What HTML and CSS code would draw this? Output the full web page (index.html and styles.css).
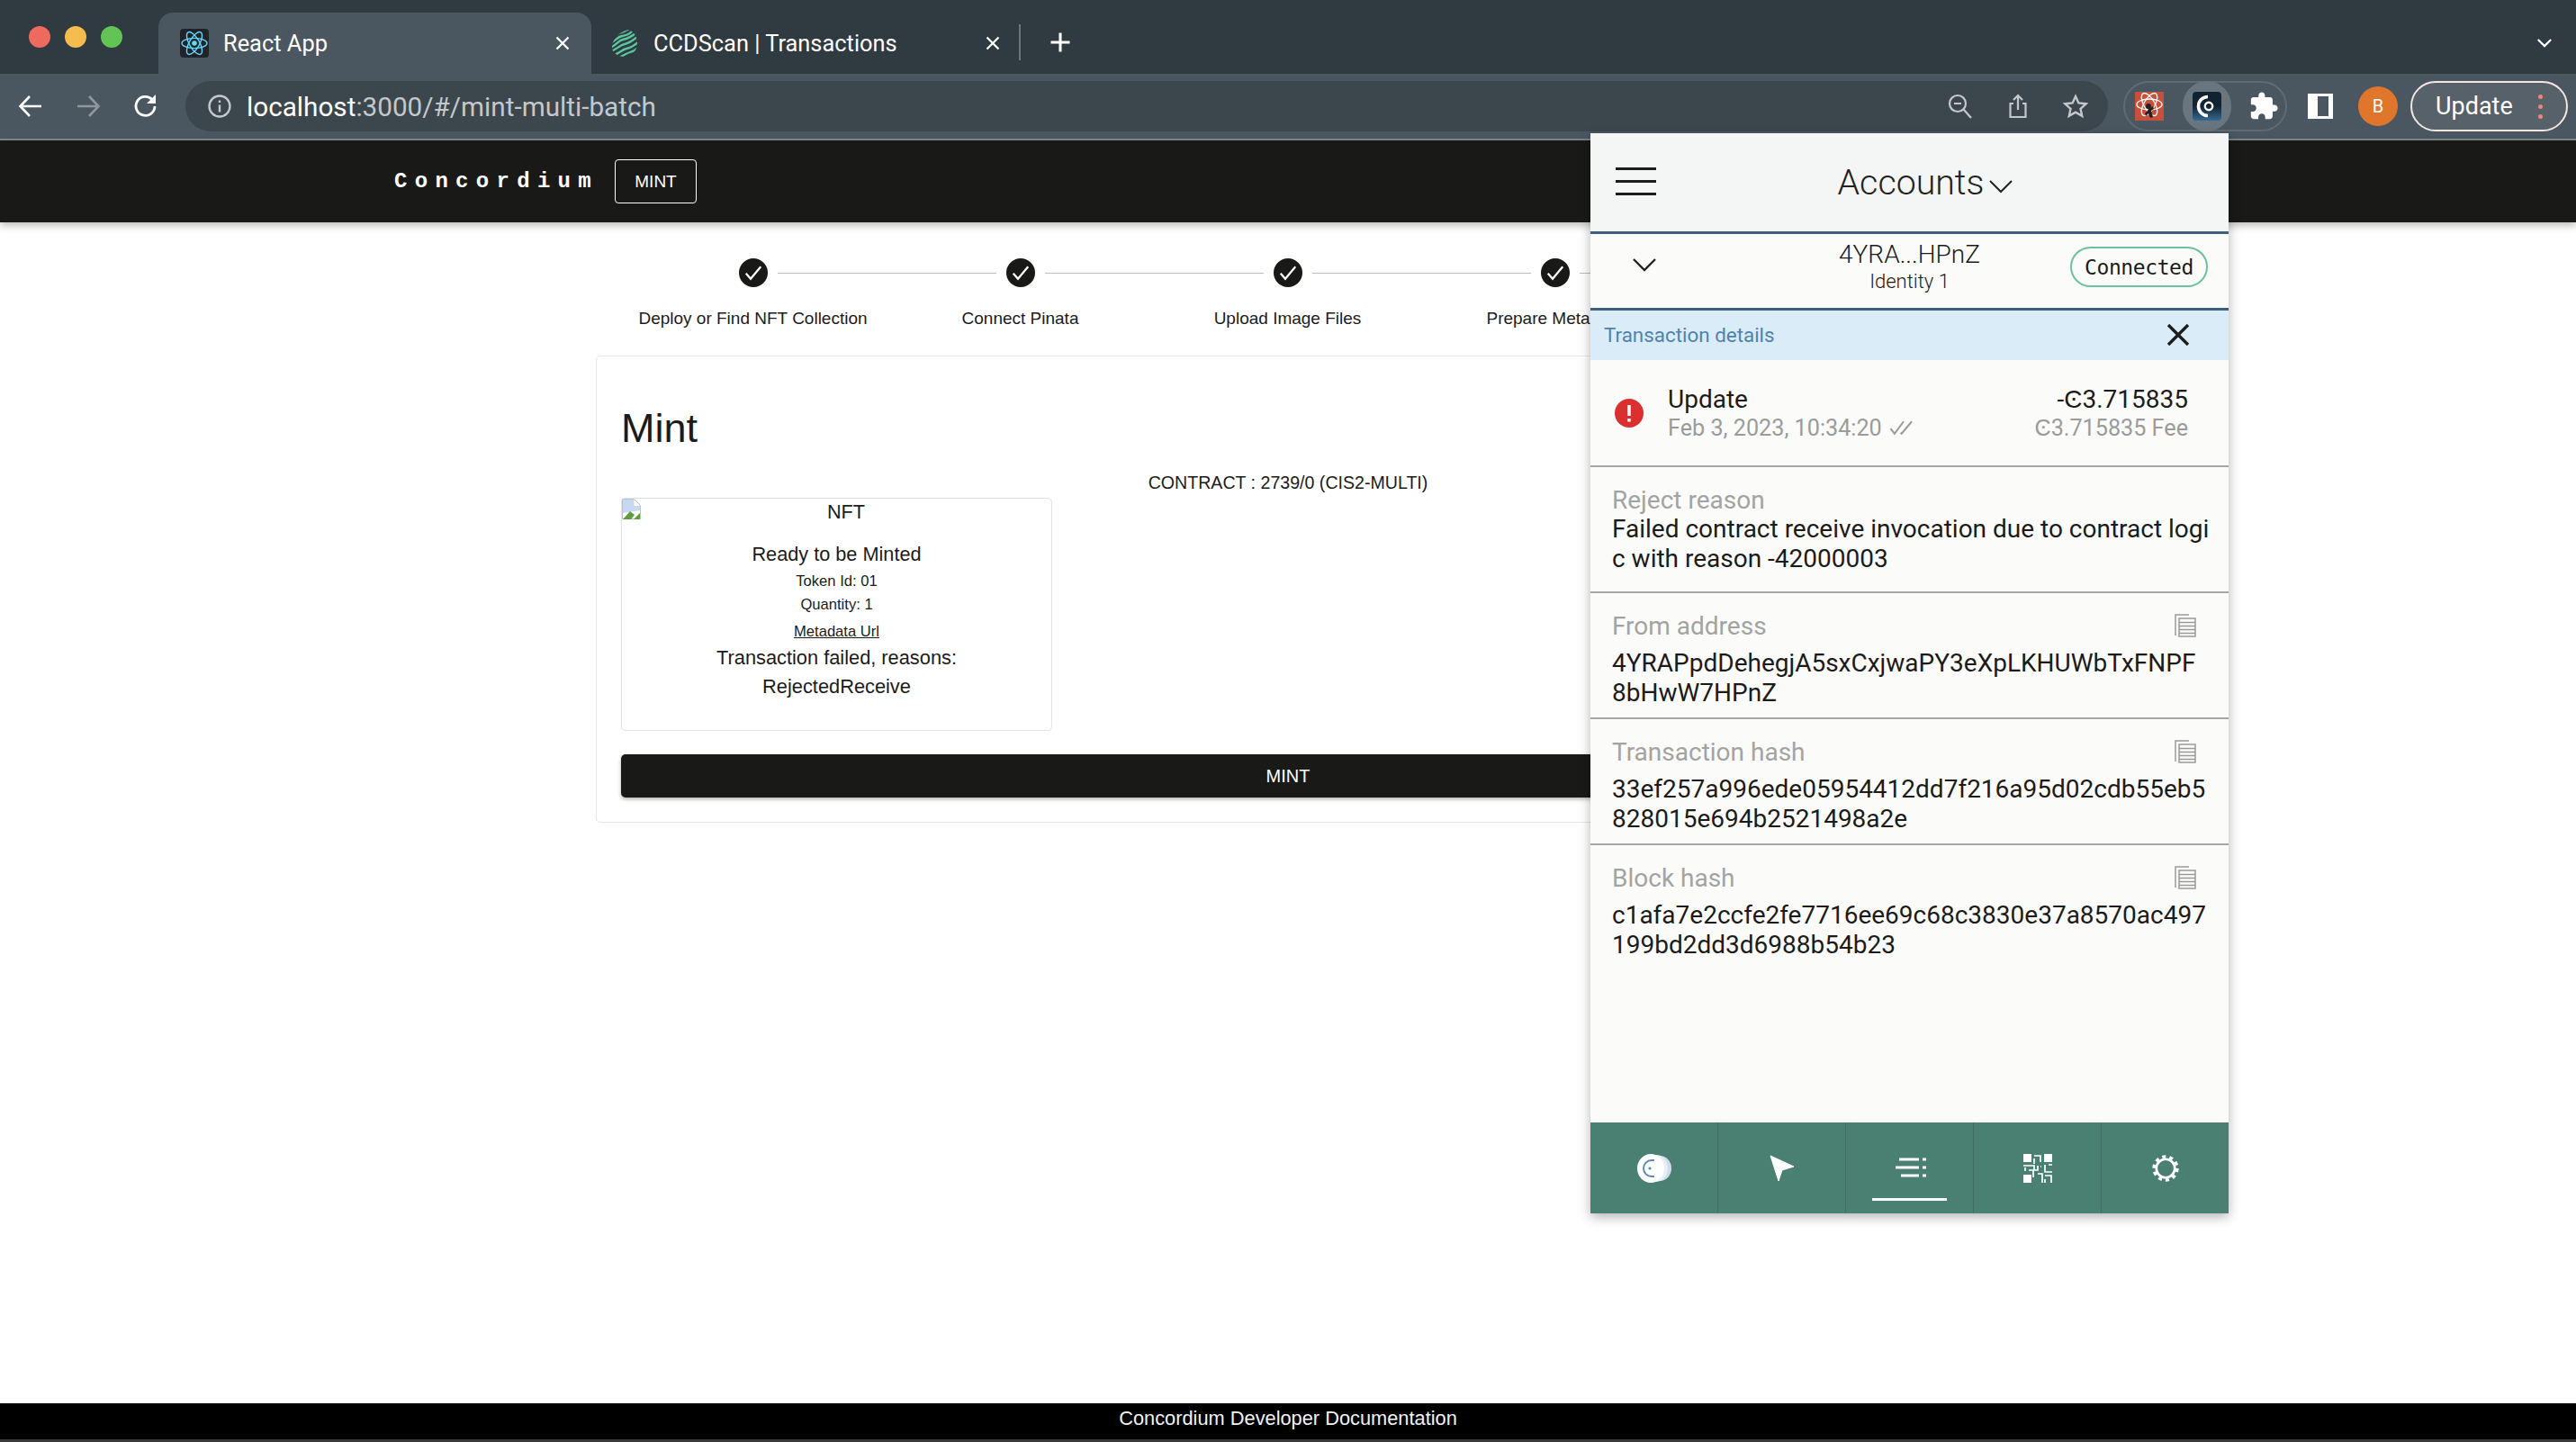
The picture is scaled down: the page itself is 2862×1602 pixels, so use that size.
FILE: index.html
```html
<!DOCTYPE html>
<html lang="en">
  <head>
    <meta charset="UTF-8" />
    <title>React App</title>
    <link rel="stylesheet" href="styles.css">
  </head>
  <body>
    <!-- Browser chrome -->
    <div class="tabstrip">
      <div class="traffic">
        <span class="light light-red"></span>
        <span class="light light-yellow"></span>
        <span class="light light-green"></span>
      </div>
      <div class="tab tab-active">
        <svg class="favicon" viewBox="0 0 32 32">
          <rect width="32" height="32" rx="4" fill="#20232a"/>
          <g fill="none" stroke="#61dafb" stroke-width="1.4">
            <ellipse cx="16" cy="16" rx="14" ry="5.6"/>
            <ellipse cx="16" cy="16" rx="14" ry="5.6" transform="rotate(60 16 16)"/>
            <ellipse cx="16" cy="16" rx="14" ry="5.6" transform="rotate(120 16 16)"/>
          </g>
          <circle cx="16" cy="16" r="2.8" fill="#61dafb"/>
        </svg>
        <span class="tab-title">React App</span>
        <svg class="tab-close" viewBox="0 0 16 16"><path d="M1.500 1.500l13 13M14.500 1.500l-13 13" stroke="#fff" stroke-width="2.200"/></svg>
      </div>
      <div class="tab">
        <svg class="favicon" viewBox="0 0 32 32">
          <defs>
            <clipPath id="leaf"><path d="M20 1c7 2 10 9 10 15s-3 11-10 15c-8 1-16-2-18-9C1 14 8 4 20 1z"/></clipPath>
          </defs>
          <g clip-path="url(#leaf)" fill="none" stroke="#5cc79d" stroke-width="2.300">
            <path d="M0 12c6-3 7-7 12-8s5-3 12-5"/>
            <path d="M0 16c6-3 8-7 13-8s7-1 12-6"/>
            <path d="M0 21c7-3 9-8 14-9s8-2 14-7"/>
            <path d="M1 25c7-3 10-7 15-8s8-3 14-8"/>
            <path d="M4 29c7-2 9-6 14-7s8-3 13-7"/>
            <path d="M9 32c6-2 9-5 13-6s6-2 10-6"/>
          </g>
        </svg>
        <span class="tab-title">CCDScan | Transactions</span>
        <svg class="tab-close" viewBox="0 0 16 16"><path d="M1.500 1.500l13 13M14.500 1.500l-13 13" stroke="#fff" stroke-width="2.200"/></svg>
      </div>
      <span class="tab-sep"></span>
      <svg class="new-tab" viewBox="0 0 24 24"><path d="M12 3v18M3 12h18" stroke="#fff" stroke-width="2.6"/></svg>
      <svg class="tab-menu" viewBox="0 0 20 12"><path d="M2 2l8 8 8-8" fill="none" stroke="#fff" stroke-width="2.4"/></svg>
    </div>

    <div class="toolbar">
      <svg class="nav-icon" viewBox="0 0 28 28"><path d="M26 14H3M13 3L2.500 14 13 25" fill="none" stroke="#fff" stroke-width="2.6"/></svg>
      <svg class="nav-icon nav-off" viewBox="0 0 28 28"><path d="M2 14h23M15 3l10.500 11L15 25" fill="none" stroke="#8f979d" stroke-width="2.6"/></svg>
      <svg class="nav-icon" viewBox="0 0 28 28"><path d="M24 14a10.500 10.500 0 1 1-3-7.500" fill="none" stroke="#fff" stroke-width="2.8"/><path d="M25 1v10H15z" fill="#fff"/></svg>
      <div class="omnibox">
        <svg class="info" viewBox="0 0 28 28"><circle cx="14" cy="14" r="11.500" fill="none" stroke="#c4c8cb" stroke-width="2.400"/><path d="M14 12.500v8M14 7.500v2.600" stroke="#c4c8cb" stroke-width="2.400"/></svg>
        <span class="url"><span class="url-host">localhost</span>:3000/#/mint-multi-batch</span>
        <div class="omni-actions">
          <svg class="omni-icon" viewBox="0 0 28 28"><circle cx="11" cy="11" r="9" fill="none" stroke="#c4c8cb" stroke-width="2.200"/><path d="M7 11h8M17.500 17.500L26 27" stroke="#c4c8cb" stroke-width="2.200"/></svg>
          <svg class="omni-icon" viewBox="0 0 28 28"><path d="M9 11H5.500v15h17V11H19M14 18V2M9 7l5-5 5 5" fill="none" stroke="#c4c8cb" stroke-width="2.200"/></svg>
          <svg class="omni-icon" viewBox="0 0 28 28"><path d="M14 3l3.400 7.400 8.100.9-6 5.500 1.700 8L14 20.700 6.800 24.800l1.700-8-6-5.500 8.100-.9z" fill="none" stroke="#c4c8cb" stroke-width="2.400"/></svg>
        </div>
      </div>
      <div class="ext-group">
        <svg class="ext-icon" viewBox="0 0 32 32">
          <rect width="32" height="32" fill="#c8503a"/>
          <g fill="none" stroke="#fff" stroke-width="1.300">
            <ellipse cx="16" cy="14" rx="14" ry="6"/>
            <ellipse cx="16" cy="14" rx="14" ry="6" transform="rotate(60 16 14)"/>
            <ellipse cx="16" cy="14" rx="14" ry="6" transform="rotate(120 16 14)"/>
          </g>
          <circle cx="15" cy="16" r="3" fill="#222"/>
          <path d="M15 19l5-3 1 3-3 2 2 7-3 1-2-5-3 3-1-3 3-3z" fill="#222"/>
        </svg>
        <div class="ext-active">
          <svg class="ext-icon" viewBox="0 0 32 32">
            <defs>
              <linearGradient id="ccd" x1="0" y1="0" x2="0" y2="1">
                <stop offset="0.5" stop-color="#112233"/>
                <stop offset="1" stop-color="#356a91"/>
              </linearGradient>
            </defs>
            <rect width="32" height="32" rx="4" fill="url(#ccd)"/>
            <path d="M17 5.500a10.500 10.500 0 0 0 0 21" fill="none" stroke="#fff" stroke-width="3.600"/>
            <circle cx="18" cy="16" r="4.200" fill="none" stroke="#fff" stroke-width="2.400"/>
          </svg>
        </div>
        <svg class="ext-puzzle" viewBox="0 0 24 24"><path fill="#fff" d="M20.500 11H19V7c0-1.100-.9-2-2-2h-4V3.500C13 2.120 11.880 1 10.500 1S8 2.120 8 3.500V5H4c-1.100 0-1.990.9-1.990 2v3.800H3.500c1.490 0 2.700 1.210 2.700 2.700s-1.210 2.700-2.700 2.700H2V20c0 1.100.9 2 2 2h3.800v-1.500c0-1.490 1.210-2.700 2.700-2.700 1.490 0 2.700 1.210 2.700 2.700V22H17c1.100 0 2-.9 2-2v-4h1.500c1.380 0 2.500-1.120 2.500-2.500S21.880 11 20.500 11z"/></svg>
      </div>
      <span class="sidebar-icon"></span>
      <span class="avatar">B</span>
      <div class="update-pill">
        <span>Update</span>
        <span class="update-dots"><i></i><i></i><i></i></span>
      </div>
    </div>

    <!-- App header -->
    <header class="app-header">
      <span class="brand">Concordium</span>
      <span class="header-btn">MINT</span>
    </header>

    <!-- Main content -->
    <main class="page">
      <ol class="stepper">
        <li class="step">
          <div class="step-track"><span class="step-line step-line-none"></span><span class="step-dot"><svg viewBox="0 0 16 16"><path d="M2.500 8.500l3.500 4 7.500-9" fill="none" stroke="#fff" stroke-width="1.500"/></svg></span><span class="step-line"></span></div>
          <span class="step-label">Deploy or Find NFT Collection</span>
        </li>
        <li class="step">
          <div class="step-track"><span class="step-line"></span><span class="step-dot"><svg viewBox="0 0 16 16"><path d="M2.500 8.500l3.500 4 7.500-9" fill="none" stroke="#fff" stroke-width="1.500"/></svg></span><span class="step-line"></span></div>
          <span class="step-label">Connect Pinata</span>
        </li>
        <li class="step">
          <div class="step-track"><span class="step-line"></span><span class="step-dot"><svg viewBox="0 0 16 16"><path d="M2.500 8.500l3.500 4 7.500-9" fill="none" stroke="#fff" stroke-width="1.500"/></svg></span><span class="step-line"></span></div>
          <span class="step-label">Upload Image Files</span>
        </li>
        <li class="step">
          <div class="step-track"><span class="step-line"></span><span class="step-dot"><svg viewBox="0 0 16 16"><path d="M2.500 8.500l3.500 4 7.500-9" fill="none" stroke="#fff" stroke-width="1.500"/></svg></span><span class="step-line"></span></div>
          <span class="step-label">Prepare Metadata</span>
        </li>
        <li class="step">
          <div class="step-track"><span class="step-line"></span><span class="step-dot"></span><span class="step-line step-line-none"></span></div>
          <span class="step-label">Mint</span>
        </li>
      </ol>

      <section class="panel">
        <h1 class="panel-title">Mint</h1>
        <p class="contract">CONTRACT : 2739/0 (CIS2-MULTI)</p>
        <div class="nft-card">
          <div class="nft-image">
            <svg class="broken-img" viewBox="0 0 21 23">
              <path d="M.5.500h13l7 7v15H.500z" fill="#fff" stroke="#b9c4d2"/>
              <path d="M1 1h12.500v7H20v5L1 16z" fill="#c9d8f0"/>
              <path d="M1 23l8-9 5 4-4 5z" fill="#5f9c3c"/>
              <path d="M13 23l7-7v7z" fill="#5f9c3c"/>
            </svg>
            <span class="nft-alt">NFT</span>
          </div>
          <p class="nft-line nft-status">Ready to be Minted</p>
          <p class="nft-line nft-small">Token Id: 01</p>
          <p class="nft-line nft-small">Quantity: 1</p>
          <a class="nft-line nft-small nft-link">Metadata Url</a>
          <p class="nft-line nft-error">Transaction failed, reasons:</p>
          <p class="nft-line nft-error">RejectedReceive</p>
        </div>
        <button class="mint-button">MINT</button>
      </section>
    </main>

    <footer class="app-footer">
      <span>Concordium Developer Documentation</span>
    </footer>

    <!-- Wallet extension popup -->
    <aside class="wallet">
      <div class="wallet-top">
        <span class="burger"><i></i><i></i><i></i></span>
        <span class="wallet-title">Accounts<svg class="title-chevron" viewBox="0 0 28 16"><path d="M2 2l12 12L26 2" fill="none" stroke="#222" stroke-width="2"/></svg></span>
      </div>
      <div class="account-row">
        <svg class="account-chevron" viewBox="0 0 28 16"><path d="M2 2l12 12L26 2" fill="none" stroke="#222" stroke-width="2.400"/></svg>
        <div class="account-name">
          <span class="account-addr">4YRA...HPnZ</span>
          <span class="account-id">Identity 1</span>
        </div>
        <span class="connected">Connected</span>
      </div>
      <div class="details-bar">
        <span>Transaction details</span>
        <svg class="details-close" viewBox="0 0 26 24"><path d="M2 1l22 22M24 1L2 23" stroke="#1c1c1c" stroke-width="3.400"/></svg>
      </div>
      <div class="tx-row">
        <svg class="tx-alert" viewBox="0 0 32 32"><circle cx="16" cy="16" r="16" fill="#da3030"/><path d="M16 7v12M16 22v3.500" stroke="#fff" stroke-width="3.400"/></svg>
        <div class="tx-main">
          <span class="tx-type">Update</span>
          <span class="tx-date">Feb 3, 2023, 10:34:20
            <svg class="tx-check" viewBox="0 0 28 16"><path d="M1 9l4 5 9-12M11 13l1 1 10-12" fill="none" stroke="#9b9b9b" stroke-width="1.800"/></svg>
          </span>
        </div>
        <div class="tx-amounts">
          <span class="tx-type">-Ͼ3.715835</span>
          <span class="tx-date">Ͼ3.715835 Fee</span>
        </div>
      </div>
      <div class="detail detail-reject">
        <div class="detail-head"><span class="detail-label">Reject reason</span></div>
        <p class="detail-value">Failed contract receive invocation due to contract logic with reason -42000003</p>
      </div>
      <div class="detail">
        <div class="detail-head">
          <span class="detail-label">From address</span>
          <svg class="copy" viewBox="0 0 24 26"><path d="M1 24V1h15M5 5h18v20H5zM5 9.500h18M5 13.500h18M5 17.500h18M5 21.500h18" fill="none" stroke="#9a9a9a" stroke-width="1.500"/></svg>
        </div>
        <p class="detail-value">4YRAPpdDehegjA5sxCxjwaPY3eXpLKHUWbTxFNPF8bHwW7HPnZ</p>
      </div>
      <div class="detail">
        <div class="detail-head">
          <span class="detail-label">Transaction hash</span>
          <svg class="copy" viewBox="0 0 24 26"><path d="M1 24V1h15M5 5h18v20H5zM5 9.500h18M5 13.500h18M5 17.500h18M5 21.500h18" fill="none" stroke="#9a9a9a" stroke-width="1.500"/></svg>
        </div>
        <p class="detail-value">33ef257a996ede05954412dd7f216a95d02cdb55eb5828015e694b2521498a2e</p>
      </div>
      <div class="detail detail-last">
        <div class="detail-head">
          <span class="detail-label">Block hash</span>
          <svg class="copy" viewBox="0 0 24 26"><path d="M1 24V1h15M5 5h18v20H5zM5 9.500h18M5 13.500h18M5 17.500h18M5 21.500h18" fill="none" stroke="#9a9a9a" stroke-width="1.500"/></svg>
        </div>
        <p class="detail-value">c1afa7e2ccfe2fe7716ee69c68c3830e37a8570ac497199bd2dd3d6988b54b23</p>
      </div>
      <nav class="wallet-nav">
        <div class="nav-cell">
          <svg class="nav-glyph" viewBox="0 0 40 32">
            <ellipse cx="26" cy="16" rx="13" ry="14" fill="#cfdcec"/>
            <ellipse cx="22" cy="16" rx="13" ry="15" fill="#e8eef6"/>
            <ellipse cx="16" cy="16" rx="15" ry="16" fill="#fff"/>
            <path d="M20 7h-3a9 9 0 0 0 0 18h3" fill="none" stroke="#5c8ab5" stroke-width="2"/>
            <circle cx="15" cy="16" r="1.600" fill="#5c8ab5"/>
          </svg>
        </div>
        <div class="nav-cell">
          <svg class="nav-glyph" viewBox="0 0 40 32"><path d="M7 2l26 12-13 4-4 12z" fill="#fff" stroke="#fff" stroke-linejoin="round"/></svg>
        </div>
        <div class="nav-cell nav-cell-active">
          <svg class="nav-glyph" viewBox="0 0 40 32">
            <path d="M8 6h22M4 15h26M10 24h20" stroke="#fff" stroke-width="3"/>
            <path d="M34 6h4M34 15h4M34 24h4" stroke="#fff" stroke-width="3"/>
          </svg>
        </div>
        <div class="nav-cell">
          <svg class="nav-glyph" viewBox="0 0 32 32">
            <path d="M0 0h9v9H0zM23 0h9v9h-9zM0 23h9v9H0z" fill="#fff"/>
            <path d="M12 2h7v7M12 5v6M0 13h12v5H6M24 12v8h8M16 13v5h-5v8M16 22h5v10M24 24h7v8M24 28v4M2 15v4M28 12h4M20 14h-1" fill="none" stroke="#fff" stroke-width="1.700"/>
          </svg>
        </div>
        <div class="nav-cell">
          <svg class="nav-glyph" viewBox="0 0 36 36">
            <circle cx="18" cy="18" r="11.500" fill="none" stroke="#fff" stroke-width="3"/>
            <circle cx="18" cy="18" r="14.500" fill="none" stroke="#fff" stroke-width="4" stroke-dasharray="4.500 4.600"/>
          </svg>
        </div>
      </nav>
    </aside>
  </body>
</html>
```

FILE: styles.css
```css
/* Base styles */
* {
  margin: 0;
  padding: 0;
  box-sizing: border-box;
}

html, body {
  height: 100%;
}

body {
  position: relative;
  display: flex;
  flex-direction: column;
  height: 1602px;
  overflow: hidden;
  background: #fff;
  color: #1b1b1b;
  font-family: "Liberation Sans", Arial, sans-serif;
}

/* Tab strip */
.tabstrip {
  display: flex;
  align-items: flex-end;
  height: 82px;
  padding-right: 26px;
  background: #2f3a41;
}

.traffic {
  display: flex;
  align-self: stretch;
  align-items: center;
  gap: 16px;
  width: 176px;
  padding: 0 0 0 32px;
}

.light {
  width: 24px;
  height: 24px;
  border-radius: 50%;
}

.light-red { background: #ee6a5e; }
.light-yellow { background: #f5bd4f; }
.light-green { background: #61c454; }

.tab {
  display: flex;
  align-items: center;
  width: 481px;
  height: 68px;
  padding: 0 24px;
  border-radius: 16px 16px 0 0;
  color: #fff;
  font: 25.400px Roboto, sans-serif;
}

.tab + .tab {
  width: 475px;
  padding: 0 21px;
}

.tab-active {
  background: #4a5761;
}

.favicon {
  flex: none;
  width: 32px;
  height: 32px;
  margin-right: 16px;
}

.tab-title {
  flex: 1;
  white-space: nowrap;
}

.tab-close {
  width: 16px;
  height: 16px;
}

.tab-sep {
  align-self: center;
  width: 2px;
  height: 40px;
  margin-top: 12px;
  background: #6a747b;
}

.new-tab {
  align-self: center;
  width: 28px;
  height: 28px;
  margin: 12px 0 0 30px;
}

.tab-menu {
  align-self: center;
  width: 18px;
  height: 11px;
  margin: 12px 0 0 auto;
}

/* Toolbar */
.toolbar {
  display: flex;
  align-items: center;
  gap: 0;
  height: 74px;
  padding: 0 9px 0 20px;
  background: #4a5761;
  border-bottom: 2px solid #7d878e;
}

.nav-icon {
  flex: none;
  width: 28px;
  height: 28px;
  margin-right: 36px;
}

.nav-icon:nth-child(3) {
  margin-right: 30px;
}

.omnibox {
  display: flex;
  align-items: center;
  width: 2136px;
  height: 56px;
  padding: 0 22px 0 24px;
  border-radius: 28px;
  background: #3c464d;
  color: #c4c8cb;
  font: 29.700px Roboto, sans-serif;
}

.info {
  width: 28px;
  height: 28px;
  margin-right: 16px;
}

.url-host {
  color: #fff;
}

.omni-actions {
  display: flex;
  gap: 36px;
  margin-left: auto;
}

.omni-icon {
  width: 28px;
  height: 28px;
}

.ext-group {
  display: flex;
  align-items: center;
  width: 182px;
  height: 56px;
  margin-left: 17px;
  padding-left: 11px;
  border: 2px solid #5f6b74;
  border-radius: 28px;
}

.ext-icon {
  display: block;
  flex: none;
  width: 32px;
  height: 32px;
}

.ext-active {
  display: flex;
  align-items: center;
  justify-content: center;
  width: 54px;
  height: 56px;
  margin-left: 21px;
  border-radius: 27px;
  background: #6a767f;
}

.ext-puzzle {
  width: 34px;
  height: 34px;
  margin-left: 19px;
}

.sidebar-icon {
  width: 28px;
  height: 28px;
  margin-left: 23px;
  border: solid #fff;
  border-width: 3px 5px 3px 11px;
}

.avatar {
  display: flex;
  align-items: center;
  justify-content: center;
  width: 44px;
  height: 44px;
  margin-left: 28px;
  border-radius: 50%;
  background: #e0762c;
  color: #fff;
  font: 20px Roboto, sans-serif;
}

.update-pill {
  display: flex;
  align-items: center;
  justify-content: space-between;
  width: 175px;
  height: 56px;
  margin-left: 14px;
  padding: 0 26px 0 26px;
  border: 2px solid #f4e6e3;
  border-radius: 28px;
  background: #566169;
  color: #fff;
  font: 27px Roboto, sans-serif;
}

.update-dots {
  display: flex;
  flex-direction: column;
  gap: 6px;
}

.update-dots i {
  width: 5px;
  height: 5px;
  border-radius: 50%;
  background: #e8877b;
}

/* App header */
.app-header {
  display: flex;
  align-items: center;
  height: 91px;
  padding-left: 438px;
  background: #191917;
  box-shadow: 0 4px 8px rgba(0, 0, 0, 0.25);
  color: #fff;
  position: relative;
}

.brand {
  width: 246px;
  font: bold 24px "Liberation Mono", monospace;
  letter-spacing: 8.300px;
}

.header-btn {
  display: flex;
  align-items: center;
  justify-content: center;
  width: 91px;
  height: 49px;
  margin-left: -1px;
  border: 1px solid #fff;
  border-radius: 4px;
  font-size: 19px;
}

/* Main content */
.page {
  flex: 1;
  width: 1538px;
  margin: 0 auto;
  padding-top: 40px;
}

.stepper {
  display: grid;
  grid-template-columns: repeat(5, 297px);
  justify-content: center;
  padding-right: 1px;
  list-style: none;
}

.step {
  display: flex;
  flex-direction: column;
  align-items: center;
}

.step-track {
  display: flex;
  align-items: center;
  gap: 11px;
  width: 100%;
}

.step-line {
  flex: 1;
  height: 1px;
  background: #bdbdbd;
}

.step-line-none {
  background: transparent;
}

.step-dot {
  display: flex;
  align-items: center;
  justify-content: center;
  width: 32px;
  height: 32px;
  border-radius: 50%;
  background: #191917;
}

.step-dot svg {
  width: 24px;
  height: 24px;
}

.step-label {
  margin-top: 23px;
  font-size: 19px;
  line-height: 24px;
  white-space: nowrap;
}

.panel {
  margin-top: 29px;
  padding: 52px 27px 27px;
  border: 1px solid #e6e6e6;
  border-radius: 5px;
}

.panel-title {
  font-size: 45px;
  font-weight: 400;
  line-height: 56px;
}

.contract {
  margin-top: 20px;
  font-size: 19.600px;
  line-height: 24px;
  text-align: center;
}

.nft-card {
  width: 479px;
  height: 259px;
  margin-top: 5px;
  border: 1px solid #e2e2e2;
  border-radius: 5px;
  text-align: center;
}

.nft-image {
  display: flex;
  height: 30px;
  margin-bottom: 17px;
}

.broken-img {
  width: 21px;
  height: 23px;
}

.nft-alt {
  flex: 1;
  font-size: 21.700px;
  line-height: 30px;
}

.nft-line {
  display: block;
}

.nft-status {
  margin-bottom: 2px;
  font-size: 21.700px;
  line-height: 30px;
}

.nft-small {
  font-size: 16.600px;
  line-height: 26px;
}

.nft-link {
  margin-top: 4px;
  text-decoration: underline;
}

.nft-error {
  font-size: 21.800px;
  line-height: 32px;
}

.mint-button {
  display: block;
  width: 100%;
  height: 48px;
  margin-top: 26px;
  border: none;
  border-radius: 5px;
  background: #191917;
  box-shadow: 0 2px 4px rgba(0, 0, 0, 0.3);
  color: #fff;
  font: 20px "Liberation Sans", Arial, sans-serif;
}

/* Footer */
.app-footer {
  height: 43px;
  padding-top: 4px;
  background: #000;
  border-bottom: 3px solid #3a3a3a;
  color: #f2f2f2;
  font-size: 21.800px;
  line-height: 25px;
  text-align: center;
}

/* Wallet popup */
.wallet {
  position: absolute;
  top: 148px;
  left: 1767px;
  display: flex;
  flex-direction: column;
  width: 709px;
  height: 1200px;
  background: #fbfbf9;
  box-shadow: 0 4px 12px rgba(0, 0, 0, 0.3);
  font-family: Roboto, sans-serif;
}

.wallet-top {
  position: relative;
  display: flex;
  align-items: center;
  justify-content: center;
  flex: none;
  height: 112px;
  padding-left: 36px;
  background: #f4f6f5;
  border-bottom: 3px solid #3f5f7f;
}

.burger {
  position: absolute;
  left: 28px;
  top: 38px;
  display: flex;
  flex-direction: column;
  gap: 11px;
}

.burger i {
  display: block;
  width: 45px;
  height: 3px;
  background: #1c1c1c;
}

.wallet-title {
  display: flex;
  align-items: center;
  color: #222;
  font-size: 39.300px;
  font-weight: 300;
}

.title-chevron {
  width: 28px;
  height: 16px;
  margin: 8px 0 0 5px;
}

.account-row {
  position: relative;
  display: flex;
  flex: none;
  align-items: center;
  justify-content: center;
  height: 85px;
  padding-bottom: 10px;
  border-bottom: 3px solid #3f5f7f;
}

.account-chevron {
  position: absolute;
  left: 46px;
  top: 26px;
  width: 28px;
  height: 16px;
}

.account-name {
  display: flex;
  flex-direction: column;
  align-items: center;
}

.account-addr {
  font-size: 28px;
  font-weight: 300;
  line-height: 34px;
}

.account-id {
  font-size: 22px;
  font-weight: 300;
  line-height: 26px;
}

.connected {
  position: absolute;
  top: 14px;
  left: 533px;
  display: flex;
  align-items: center;
  justify-content: center;
  width: 153px;
  height: 45px;
  border: 2px solid #6fc0a2;
  border-radius: 23px;
  font: 23px "DejaVu Sans Mono", monospace;
  letter-spacing: -0.4px;
}

.details-bar {
  display: flex;
  flex: none;
  align-items: center;
  justify-content: space-between;
  height: 55px;
  padding: 0 43px 2px 15px;
  background: #dbecf9;
  color: #4f83ad;
  font-size: 22.400px;
}

.details-close {
  width: 26px;
  height: 24px;
}

.tx-row {
  display: flex;
  flex: none;
  align-items: center;
  height: 119px;
  padding: 2px 45px 0 27px;
  border-bottom: 2px solid #a6a6a6;
}

.tx-alert {
  flex: none;
  width: 32px;
  height: 32px;
  margin: -2px 27px 0 0;
}

.tx-main,
.tx-amounts {
  display: flex;
  flex-direction: column;
}

.tx-amounts {
  margin-left: auto;
  align-items: flex-end;
}

.tx-type {
  font-size: 28px;
  line-height: 32px;
}

.tx-date {
  color: #9b9b9b;
  font-size: 25.200px;
  line-height: 32px;
}

.tx-check {
  width: 32px;
  height: 18px;
  margin-left: 2px;
}

.detail {
  flex: none;
  height: 140px;
  padding: 14px 24px 0;
  border-bottom: 2px solid #a6a6a6;
}

.detail-reject {
  padding: 20px 14px 0 24px;
}

.detail-last {
  flex: 1;
  border-bottom: none;
}

.detail-head {
  display: flex;
  align-items: center;
  justify-content: space-between;
  height: 44px;
  margin-bottom: 3px;
  padding-right: 12px;
}

.detail-reject .detail-head {
  height: 32px;
  margin-bottom: 0;
}

.detail-label {
  color: #a3a3a3;
  font-size: 28px;
}

.detail-value {
  font-size: 28px;
  line-height: 33px;
  word-break: break-all;
}

.copy {
  width: 24px;
  height: 26px;
}

.wallet-nav {
  display: flex;
  flex: none;
  height: 101px;
  background: #4a8072;
}

.nav-cell {
  position: relative;
  display: flex;
  flex: 1;
  align-items: center;
  justify-content: center;
  border-right: 1px solid #3f6f63;
}

.nav-cell:last-child {
  border-right: none;
}

.nav-cell-active::after {
  content: "";
  position: absolute;
  left: 29px;
  right: 29px;
  bottom: 14px;
  height: 3px;
  background: #fff;
}

.nav-glyph {
  width: 40px;
  height: 32px;
}
```
